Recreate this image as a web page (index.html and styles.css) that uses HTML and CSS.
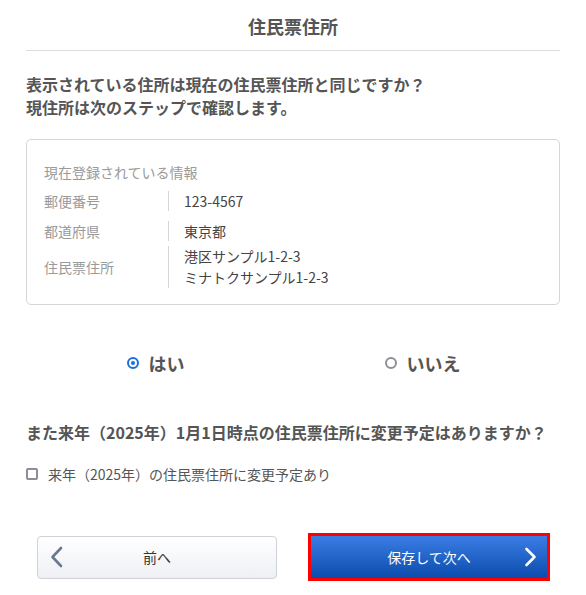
FILE: index.html
```html
<!DOCTYPE html>
<html lang="ja">
<head>
<meta charset="utf-8">
<title>住民票住所</title>
<link rel="stylesheet" href="styles.css">
</head>
<body>
<div class="page">
  <header class="header">
    <h1 class="title">住民票住所</h1>
  </header>

  <p class="lead">表示されている住所は現在の住民票住所と同じですか？<br>現住所は次のステップで確認します。</p>

  <section class="card">
    <div class="card-label">現在登録されている情報</div>
    <div class="row row-1">
      <div class="row-key">郵便番号</div>
      <div class="row-val">123-4567</div>
    </div>
    <div class="row row-2">
      <div class="row-key">都道府県</div>
      <div class="row-val">東京都</div>
    </div>
    <div class="row row-3">
      <div class="row-key">住民票住所</div>
      <div class="row-val">港区サンプル1-2-3<br>ミナトクサンプル1-2-3</div>
    </div>
  </section>

  <div class="radios">
    <label class="radio-cell">
      <span class="radio radio-on"></span>
      <span class="radio-text">はい</span>
    </label>
    <label class="radio-cell">
      <span class="radio"></span>
      <span class="radio-text">いいえ</span>
    </label>
  </div>

  <p class="question">また来年（2025年）1月1日時点の住民票住所に変更予定はありますか？</p>

  <label class="check-row">
    <span class="checkbox"></span>
    <span class="check-text">来年（2025年）の住民票住所に変更予定あり</span>
  </label>

  <div class="buttons">
    <button class="btn btn-back" type="button">
      <svg class="chev chev-left" width="13" height="22" viewBox="0 0 13 22"><path d="M11 2 L2.5 11 L11 20" fill="none" stroke="#6b7891" stroke-width="2.6" stroke-linecap="round" stroke-linejoin="round"/></svg>
      <span>前へ</span>
    </button>
    <button class="btn btn-next" type="button">
      <span>保存して次へ</span>
      <svg class="chev chev-right" width="13" height="20" viewBox="0 0 13 20"><path d="M2.5 2 L10.5 10 L2.5 18" fill="none" stroke="#ffffff" stroke-width="2.6" stroke-linecap="round" stroke-linejoin="round"/></svg>
    </button>
  </div>
</div>
</body>
</html>
```

FILE: styles.css
```css
* { box-sizing: border-box; }

html, body {
  margin: 0;
  padding: 0;
  background: #ffffff;
}

body {
  font-family: "Noto Sans CJK JP", "Noto Sans", sans-serif;
  color: #555555;
}

.page {
  width: 586px;
  padding: 0 26px;
}

.header {
  padding: 14px 0 11px;
  border-bottom: 1px solid #dcdcdc;
  text-align: center;
}

.title {
  margin: 0;
  font-size: 18px;
  line-height: 25px;
  font-weight: 700;
  color: #555555;
}

.lead {
  margin: 22px 0 0;
  font-size: 16px;
  line-height: 23px;
  font-weight: 700;
  color: #555555;
}

.card {
  margin-top: 20px;
  border: 1px solid #d6d6d6;
  border-radius: 5px;
  padding: 22px 17px 15px;
  height: 166px;
}

.card-label {
  font-size: 14px;
  line-height: 20px;
  color: #9a9a9a;
}

.row {
  display: flex;
  align-items: center;
}

.row-1 { margin-top: 9px; }
.row-2 { margin-top: 10px; }
.row-3 { margin-top: 5px; }

.row-key {
  width: 124px;
  flex: none;
  font-size: 14px;
  line-height: 20px;
  color: #9a9a9a;
}

.row-val {
  border-left: 1px solid #d6d6d6;
  padding-left: 15px;
  font-size: 14px;
  line-height: 20px;
  color: #444444;
}

.row-3 .row-val {
  line-height: 21px;
}

.radios {
  margin-top: 45px;
  display: flex;
}

.radio-cell {
  flex: 1;
  display: flex;
  align-items: center;
  justify-content: center;
  gap: 10px;
  padding-right: 8px;
}

.radio {
  width: 12px;
  height: 12px;
  border-radius: 50%;
  border: 2px solid #8e8e96;
  flex: none;
  position: relative;
}

.radio-on {
  border-color: #1a6fe0;
}

.radio-on::after {
  content: "";
  position: absolute;
  left: 2px;
  top: 2px;
  width: 4px;
  height: 4px;
  border-radius: 50%;
  background: #1a6fe0;
}

.radio-text {
  font-size: 18px;
  line-height: 26px;
  font-weight: 700;
  color: #555555;
}

.question {
  margin: 45px 0 0;
  font-size: 16px;
  line-height: 23px;
  font-weight: 700;
  color: #555555;
}

.check-row {
  margin-top: 20px;
  display: flex;
  align-items: center;
  gap: 10px;
}

.checkbox {
  width: 12px;
  height: 12px;
  border: 2px solid #8e8e96;
  border-radius: 2px;
  flex: none;
}

.check-text {
  font-size: 14px;
  line-height: 20px;
  color: #555555;
}

.buttons {
  margin-top: 49px;
  padding: 0 10px 0 11px;
  display: flex;
  align-items: center;
  justify-content: space-between;
}

.btn {
  position: relative;
  display: flex;
  align-items: center;
  justify-content: center;
  font-family: "Noto Sans CJK JP", "Noto Sans", sans-serif;
  font-size: 14px;
  cursor: pointer;
}

.btn-back {
  width: 240px;
  height: 43px;
  border: 1px solid #cfd2d8;
  border-radius: 4px;
  background: linear-gradient(#ffffff, #eef0f4);
  color: #333333;
}

.btn-next {
  width: 242px;
  height: 48px;
  border: 3px solid #ff0000;
  border-radius: 0;
  background: linear-gradient(#3b7de4, #0b4cad);
  color: #ffffff;
  font-size: 14px;
}

.chev {
  position: absolute;
  top: 50%;
  transform: translateY(-50%);
}

.chev-left { left: 12px; }
.chev-right { right: 10px; }
```
